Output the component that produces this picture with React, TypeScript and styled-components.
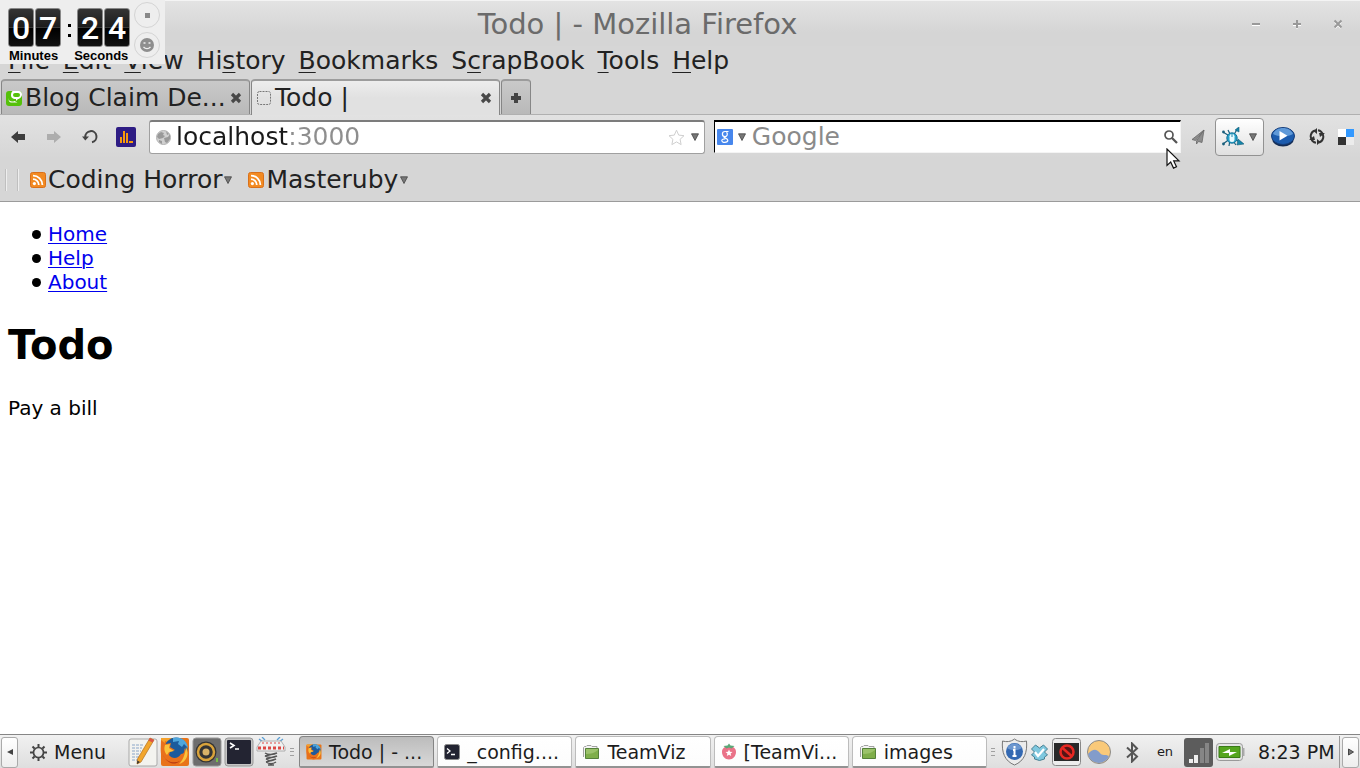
import React from 'react';
import styled, { createGlobalStyle, css } from 'styled-components';

const Global = createGlobalStyle`
  *, *::before, *::after { box-sizing: border-box; }
  body { margin: 0; background: #fff; font-family: "DejaVu Sans", sans-serif; }
  button, input { font: inherit; color: inherit; }
  svg { display: block; flex: none; }
`;

const Desktop = styled.div`
  position: relative;
  min-height: 100vh;
  display: flex;
  flex-direction: column;
  overflow: hidden;
`;

/* ---------- browser chrome ---------- */

const Chrome = styled.header`
  background: #d6d6d6;
  border-bottom: 1px solid #9b9b9b;
  color: #222;
  font-size: 25px;
  line-height: 30px;
`;

const TitleBar = styled.div`
  display: flex;
  align-items: center;
  height: 46px;
  padding: 0 2px 0 40px;
  background: linear-gradient(#e3e3e3, #d5d5d5 70%);
  border-top: 1px solid #f4f4f4;
  color: #6b6b6b;
`;

const WindowTitle = styled.div`
  flex: 1;
  text-align: center;
  font-size: 29px;
  white-space: nowrap;
`;

const PlainButton = styled.button`
  display: flex;
  align-items: center;
  justify-content: center;
  border: 0;
  padding: 0;
  background: none;
`;

const WindowButton = styled(PlainButton)`
  width: 41px;
  height: 30px;
`;

const MenuBar = styled.nav`
  display: flex;
  height: 32px;
  padding-left: 1px;
`;

const MenuItem = styled.button`
  border: 0;
  background: none;
  padding: 0 6px 0 7px;
  height: 30px;
  line-height: 30px;
  white-space: nowrap;
  u { text-decoration-thickness: 1px; text-underline-offset: 3px; }
`;

const TabStrip = styled.div`
  display: flex;
  gap: 1px;
  height: 37px;
  padding: 1px 0 0 1px;
  border-bottom: 1px solid #b0b0b0;
`;

const tabShape = css<{ $active?: boolean }>`
  border: 1px solid #868686;
  border-top: 2px solid #9c9c9c;
  border-bottom: 0;
  border-radius: 4px 4px 0 0;
  background: ${p => (p.$active ? 'linear-gradient(#ededed, #e1e1e1 50%)' : 'linear-gradient(#c9c9c9, #b9b9b9)')};
  height: ${p => (p.$active ? '36px' : '35px')};
`;

const Tab = styled.div<{ $active?: boolean }>`
  ${tabShape}
  display: flex;
  align-items: center;
  flex: 0 1 249px;
  min-width: 0;
  padding: 0 4px;
`;

const TabLabel = styled.button`
  flex: 1;
  min-width: 0;
  display: flex;
  align-items: center;
  gap: 3px;
  border: 0;
  padding: 0;
  background: none;
  text-align: left;
  span { white-space: nowrap; }
`;

const TabClose = styled(PlainButton)`
  width: 18px;
  height: 20px;
`;

const NewTab = styled.button`
  ${tabShape}
  width: 30px;
  padding: 0;
  display: flex;
  align-items: center;
  justify-content: center;
`;

const NavBar = styled.div`
  display: flex;
  align-items: center;
  height: 43px;
  padding: 0 6px 0 0;
  background: linear-gradient(#e2e2e2, #d6d6d6);
`;

const NavButton = styled(PlainButton)<{ $w?: number }>`
  flex: none;
  width: ${p => p.$w ?? 36}px;
  height: 36px;
`;

const AddressBox = styled.div`
  flex: 550 1 0;
  min-width: 0;
  display: flex;
  align-items: center;
  height: 34px;
  margin: 0 9px 0 5px;
  padding: 0 0 0 6px;
  background: #fff;
  border: 1px solid #a0a0a0;
  border-top: 2px solid #7c7c7c;
  border-radius: 3px;
`;

const AddressInput = styled.input`
  flex: 1;
  min-width: 0;
  border: 0;
  outline: 0;
  padding: 0 0 0 5px;
  height: 30px;
  background: linear-gradient(90deg, #1a1a1a 116px, #8e8e8e 116px);
  background-clip: text;
  -webkit-background-clip: text;
  -webkit-text-fill-color: transparent;
`;

const SearchBox = styled.div`
  position: relative;
  flex: 465 1 0;
  min-width: 0;
  display: flex;
  align-items: center;
  height: 33px;
  padding-left: 2px;
  background: #fff;
  border: 1px solid #f4f4f4;
  border-top: 2px solid #000;
  border-left-color: #000;
`;

const SearchInput = styled.input`
  flex: 1;
  min-width: 0;
  border: 0;
  outline: 0;
  padding: 0 0 0 1px;
  height: 29px;
  background: none;
  &::placeholder { color: #8a8a8a; opacity: 1; }
`;

const SmallButton = styled(PlainButton)`
  flex: none;
  width: 18px;
  height: 28px;
`;

const Pointer = styled.div`
  position: absolute;
  right: -1px;
  top: 26px;
  z-index: 3;
`;

const ProxyButton = styled.button`
  flex: none;
  display: flex;
  align-items: center;
  justify-content: center;
  gap: 5px;
  width: 49px;
  height: 38px;
  padding: 0;
  border: 1px solid #929292;
  border-radius: 4px;
  background: linear-gradient(#fff, #e0e0e0);
`;

const DeliciousButton = styled(PlainButton)`
  margin-left: 7px;
`;

const BookmarkBar = styled.div`
  display: flex;
  align-items: center;
  height: 43px;
  padding-left: 5px;
`;

const BarGrip = styled.div`
  width: 13px;
  height: 22px;
  margin-right: 12px;
  border-left: 1px solid #bfbfbf;
  border-right: 1px solid #bfbfbf;
  box-shadow: 1px 0 #eee, inset 1px 0 #eee;
`;

const Bookmark = styled.button`
  display: flex;
  align-items: center;
  gap: 2px;
  border: 0;
  padding: 0;
  margin-right: 16px;
  background: none;
  white-space: nowrap;
`;

/* ---------- web page ---------- */

const Page = styled.main`
  flex: 1;
  padding: 0 8px;
  background: #fff;
  color: #000;
  font-size: 20px;
  line-height: 24px;
`;

const NavList = styled.ul`
  margin: 20px 0 27px;
  padding-left: 24px;
  list-style: none;
  li { display: flex; align-items: center; gap: 7px; }
  li::before { content: ""; width: 9px; height: 9px; border-radius: 50%; background: #000; }
  a { color: #0000ee; text-decoration-thickness: 1px; text-underline-offset: 2px; }
`;

const Heading = styled.h1`
  margin: 0 0 27px;
  font-size: 40px;
  line-height: 48px;
`;

const Task = styled.p`
  margin: 0;
`;

/* ---------- countdown overlay ---------- */

const Timer = styled.aside`
  position: absolute;
  left: 0;
  top: 0;
  z-index: 2;
  display: flex;
  width: 165px;
  height: 64px;
  padding: 8px 4px 0 8px;
  background: #eee;
  color: #000;
`;

const TimerFace = styled.div`
  flex: none;
  width: 122px;
`;

const DigitRow = styled.div`
  display: flex;
`;

const Digits = styled.div`
  display: flex;
  gap: 1px;
`;

const TimerLabels = styled.div`
  display: flex;
  gap: 16px;
  padding-left: 1px;
  font: bold 13px/18px "Liberation Sans", sans-serif;
`;

const Digit = styled.span`
  width: 26px;
  height: 39px;
  border: 1px solid #888;
  border-radius: 3px;
  background: linear-gradient(#343434, #1c1c1c 48%, #555 49%, #000 52%, #111);
  color: #fff;
  text-align: center;
  font: 500 32px/38px Roboto, sans-serif;
`;

const Colon = styled.div`
  width: 16px;
  display: flex;
  flex-direction: column;
  align-items: center;
  gap: 7px;
  padding-top: 16px;
  i { width: 3px; height: 3px; background: #000; }
`;

const TimerButtons = styled.div`
  display: flex;
  flex-direction: column;
  gap: 4px;
  margin: -6px 0 0 4px;
`;

const RoundButton = styled(PlainButton)`
  width: 26px;
  height: 26px;
  border: 1px solid #d4d4d4;
  border-radius: 50%;
`;

/* ---------- desktop panel ---------- */

const Panel = styled.footer`
  display: flex;
  align-items: center;
  height: 34px;
  padding: 1px 1px 0;
  border-top: 1px solid #868686;
  background: linear-gradient(#f1f1f1, #dedede);
  color: #1c1c1c;
  font-size: 19px;
  line-height: 24px;
`;

const PanelArrow = styled.button`
  flex: none;
  display: flex;
  align-items: center;
  justify-content: center;
  width: 17px;
  height: 31px;
  padding: 0;
  border: 1px solid #aaa;
  border-radius: 3px;
  background: linear-gradient(#fff, #eee);
`;

const StartMenu = styled.button`
  flex: none;
  display: flex;
  align-items: center;
  gap: 7px;
  width: 110px;
  padding: 0 0 0 12px;
  border: 0;
  background: none;
`;

const Launchers = styled.div`
  flex: none;
  display: flex;
  gap: 2px;
`;

const Launcher = styled(PlainButton)`
  width: 30px;
  height: 30px;
`;

const PanelGrip = styled.div`
  flex: none;
  width: 4px;
  height: 8px;
  border-top: 1px solid #a0a0a0;
  border-bottom: 1px solid #a0a0a0;
  background: linear-gradient(transparent 2px, #a0a0a0 2px, #a0a0a0 3px, transparent 3px);
  margin: 0 5px 0 4px;
`;

const TaskList = styled.div`
  flex: 1;
  min-width: 0;
  display: flex;
  gap: 3px;
`;

const TaskButton = styled.button<{ $active?: boolean }>`
  flex: 1 1 0;
  min-width: 0;
  display: flex;
  align-items: center;
  gap: 7px;
  height: 32px;
  padding: 0 6px;
  border: 1px solid ${p => (p.$active ? '#858585' : '#bcbcbc')};
  border-bottom: 2px solid #929292;
  border-radius: 4px 4px 2px 2px;
  background: ${p => (p.$active ? 'linear-gradient(#bcbcbc, #d8d8d8)' : 'linear-gradient(#fff, #fcfcfc)')};
  span { white-space: nowrap; }
`;

const Tray = styled.div`
  flex: none;
  display: flex;
  align-items: center;
`;

const TrayCell = styled.button<{ $w: number }>`
  display: flex;
  align-items: center;
  justify-content: center;
  width: ${p => p.$w}px;
  height: 30px;
  padding: 0;
  border: 0;
  background: none;
`;

const Language = styled(TrayCell)`
  font-size: 13px;
`;

const Clock = styled.div`
  flex: none;
  width: 92px;
  padding-left: 10px;
  margin-right: 2px;
  border-right: 1px solid #999;
  line-height: 32px;
  white-space: nowrap;
`;

/* ---------- drawings ---------- */

const Down = ({ size = 8 }: { size?: number }) => (
  <svg width={size} height={size} viewBox="0 0 8 8"><path d="M.5.8h7L4 7.5z" fill="#777" stroke="#444" strokeWidth=".8" /></svg>
);

const CloseMark = () => (
  <svg width="12" height="12" viewBox="0 0 12 12"><path d="M2 2l8 8M10 2l-8 8" stroke="#484848" strokeWidth="3.200" /></svg>
);

const Feed = () => (
  <svg width="16" height="16" viewBox="0 0 16 16">
    <rect x=".5" y=".5" width="15" height="15" rx="2" fill="#f28a22" stroke="#d9701a" />
    <circle cx="4.4" cy="11.6" r="1.6" fill="#fff" />
    <path d="M3 7.2a5.8 5.8 0 0 1 5.8 5.8M3 3.6a9.4 9.4 0 0 1 9.4 9.4" fill="none" stroke="#fff" strokeWidth="1.8" />
  </svg>
);

const Firefox = ({ size }: { size: number }) => (
  <svg width={size} height={size} viewBox="0 0 30 30">
    <rect x="1" y="1" width="28" height="28" rx="2" fill="#e87418" />
    <path d="M1 1h12L8 5 5 4 4 12 1 14z" fill="#f5a12b" />
    <circle cx="16" cy="12" r="11.5" fill="#1d5b9c" />
    <path d="M13 1c7-2 14 2 15 10l-4-4-2 3-4-3 1-3-6 1z" fill="#4ea6dc" />
    <path d="M1 3l5 4 5-1-1 4 5 3-5 2-1 3c3 4 9 4 12-1 3 0 4-3 3-6 4 5 4 11-1 15-6 4-13 4-18-1C-1 19 1 10 1 3z" fill="#e9711c" />
    <path d="M5 8l5-1-1 4 5 3-5 1-2 3C4 15 4 11 5 8zM26 10c4 8 0 15-7 17 4-4 6-9 7-17z" fill="#fbc33c" />
    <path d="M3 18c3 7 11 9 17 6-4 4-12 4-17-6z" fill="#b83c12" />
  </svg>
);

const Terminal = ({ size }: { size: number }) => (
  <svg width={size} height={size} viewBox="0 0 30 30">
    <rect x="1" y="1" width="28" height="28" rx="3" fill="#c4c4c4" stroke="#999" />
    <rect x="3" y="3" width="24" height="24" rx="1" fill="#232432" />
    <path d="M6 6l4 2.500-4 2.500M11 12h4" fill="none" stroke="#fff" strokeWidth="1.600" />
  </svg>
);

const SmallTerminal = () => (
  <svg width="16" height="16" viewBox="0 0 16 16">
    <rect x=".5" y=".5" width="15" height="15" rx="2" fill="#232432" stroke="#8c8c8c" />
    <path d="M3 4.500l3 2.500-3 2.500M7 10.500h4" fill="none" stroke="#fff" strokeWidth="1.300" />
  </svg>
);

const Folder = () => (
  <svg width="18" height="16" viewBox="0 0 18 16">
    <path d="M1.5 13V3.5l1-1H4l1-1h4l1 1h5v2" fill="#f4f4f4" stroke="#a2a2a2" />
    <path d="M3.500 4.500h13v10h-13z" fill="#7fae4a" stroke="#55813a" />
    <path d="M4 5.500h12" stroke="#b5d48c" />
    <path d="M4 10c5 0 8-1 12-4v-1H4z" fill="#9bc26a" />
  </svg>
);

const Berry = () => (
  <svg width="16" height="17" viewBox="0 0 16 17">
    <path d="M8 4c4-1 7 1 7 5s-3 7.500-7 7.500S1 13 1 9s3-6 7-5z" fill="#ea7288" />
    <path d="M2.500 3l4-.5L8 .5l1.500 2 4 .5-3 2.500-2.500-1-2.500 1z" fill="#5ba777" />
    <path d="M8 6.500l1 2.200 2.500.2-1.900 1.600.6 2.500L8 11.700 5.800 13l.6-2.500-1.900-1.600 2.500-.2z" fill="#fff" />
  </svg>
);

const bookmarks = ['Coding Horror', 'Masteruby'];
const menus: [string, string, string][] = [
  ['', 'F', 'ile'], ['', 'E', 'dit'], ['', 'V', 'iew'], ['Hi', 's', 'tory'],
  ['', 'B', 'ookmarks'], ['S', 'c', 'rapBook'], ['', 'T', 'ools'], ['', 'H', 'elp'],
];
const tasks = [
  { label: 'Todo | - ...', icon: <Firefox size={16} />, active: true },
  { label: '_config....', icon: <SmallTerminal /> },
  { label: 'TeamViz', icon: <Folder /> },
  { label: '[TeamVi...', icon: <Berry /> },
  { label: 'images', icon: <Folder /> },
];

function CountdownTimer() {
  return (
    <Timer>
      <TimerFace>
        <DigitRow>
          <Digits><Digit>0</Digit><Digit>7</Digit></Digits>
          <Colon><i /><i /></Colon>
          <Digits><Digit>2</Digit><Digit>4</Digit></Digits>
        </DigitRow>
        <TimerLabels><span>Minutes</span><span>Seconds</span></TimerLabels>
      </TimerFace>
      <TimerButtons>
        <RoundButton aria-label="Stop">
          <svg width="5" height="5"><rect width="5" height="5" fill="#888" /></svg>
        </RoundButton>
        <RoundButton aria-label="Mood">
          <svg width="14" height="14" viewBox="0 0 14 14">
            <circle cx="7" cy="7" r="7" fill="#8e8e8e" />
            <path d="M3.500 5h2M8.500 5h2M3.500 9c2 2 5 2 7 0" fill="none" stroke="#eee" strokeWidth="1.400" />
          </svg>
        </RoundButton>
      </TimerButtons>
    </Timer>
  );
}

function Navigation() {
  return (
    <NavBar>
      <NavButton aria-label="Back">
        <svg width="14" height="12" viewBox="0 0 14 12"><path d="M0 6l7-6v3h7v6H7v3z" fill="#3d3d3d" /></svg>
      </NavButton>
      <NavButton aria-label="Forward">
        <svg width="14" height="12" viewBox="0 0 14 12"><path d="M14 6L7 0v3H0v6h7v3z" fill="#adadad" /></svg>
      </NavButton>
      <NavButton aria-label="Reload">
        <svg width="16" height="15" viewBox="0 0 16 15">
          <path d="M3.300 8A5.600 5.600 0 1 1 10 13.200" fill="none" stroke="#444" strokeWidth="2" />
          <path d="M0 7.500h7L3.300 11.500z" fill="#444" />
        </svg>
      </NavButton>
      <NavButton aria-label="Statistics">
        <svg width="20" height="20" viewBox="0 0 20 20">
          <rect width="20" height="20" rx="2" fill="#2e1c84" />
          <path d="M4 10h2v6H4zM7 4h2v12H7zM10 6h2v10h-2zM13 14h4v2h-4z" fill="#f79a0c" />
        </svg>
      </NavButton>
      <AddressBox>
        <svg width="15" height="15" viewBox="0 0 15 15">
          <circle cx="7.500" cy="7.500" r="7" fill="#d0d0d0" stroke="#b2b2b2" />
          <path d="M2 4l3-2 3 1-1 2 2 1-2 2-4 1-2-2zM8 8l4-1 2-3v5l-3 4-2-1zM3 10l3 1v3l-3-2zM10 1l3 3-2 1z" fill="#999" />
        </svg>
        <AddressInput aria-label="Address" defaultValue="localhost:3000" />
        <SmallButton aria-label="Bookmark this page">
          <svg width="17" height="17" viewBox="0 0 17 17"><path d="M8.500 1.200l2.200 4.900 5.300.6-3.900 3.600 1 5.300-4.600-2.700-4.600 2.700 1-5.300L1 6.700l5.300-.6z" fill="#fff" stroke="#cfcfcf" /></svg>
        </SmallButton>
        <SmallButton aria-label="History"><Down /></SmallButton>
      </AddressBox>
      <SearchBox>
        <svg width="16" height="16" viewBox="0 0 16 16">
          <rect width="16" height="16" rx="1" fill="#4787ed" />
          <path d="M11.500 2.500H8a2.600 2.600 0 1 0 0 5.200 2.600 2.600 0 0 0 1.500-4.500M7 7.700c-1 1 3.800 1.300 3.800 3.600 0 2.800-6 2.800-6 .3 0-1.400 2-1.800 3.500-1.700" fill="none" stroke="#fff" strokeWidth="1.200" />
        </svg>
        <SmallButton aria-label="Search engine"><Down /></SmallButton>
        <SearchInput aria-label="Search" placeholder="Google" />
        <SmallButton aria-label="Go">
          <svg width="14" height="14" viewBox="0 0 14 14"><circle cx="5" cy="5" r="4" fill="none" stroke="#555" strokeWidth="1.700" /><path d="M8 8l5 5" stroke="#555" strokeWidth="2.300" /></svg>
        </SmallButton>
        <Pointer>
          <svg width="15" height="22" viewBox="0 0 15 22"><path d="M1 1v16.500l3.700-3.400 2.800 6 3-1.400-2.800-5.800H13z" fill="#fff" stroke="#111" strokeWidth="1.200" /></svg>
        </Pointer>
      </SearchBox>
      <NavButton $w={34} aria-label="Send">
        <svg width="14" height="16" viewBox="0 0 14 16"><path d="M13 1L1 10.500l3.500 1zM13 1L5.500 12v3l2-2.500 3.500 1z" fill="#8d8d8d" stroke="#686868" strokeWidth=".8" /></svg>
      </NavButton>
      <ProxyButton aria-label="Proxy">
        <svg width="22" height="20" viewBox="0 0 22 20">
          <path d="M9 10L1 5M9 11l-8 6M11 9l5-8M12 12l8 4M8 13l-1 6M11 14l3 4M8 7L6 3" stroke="#195e7b" strokeWidth="1.200" />
          <path d="M13 3l4-3v5zM16 12l6 5-7 1z" fill="#1686aa" stroke="#195e7b" strokeWidth=".6" />
          <circle cx="1.500" cy="5" r="1.400" fill="#195e7b" /><circle cx="1.500" cy="17" r="1.400" fill="#195e7b" />
          <circle cx="10" cy="11" r="5.200" fill="#27a0c7" stroke="#16739a" />
          <rect x="7.500" y="7" width="5" height="8" rx="2.300" fill="#e9faff" /><path d="M10 7v3" stroke="#2488ab" />
        </svg>
        <Down />
      </ProxyButton>
      <NavButton $w={38} aria-label="Play">
        <svg width="24" height="20" viewBox="0 0 24 20">
          <ellipse cx="12" cy="11.500" rx="11" ry="8" fill="#142c53" />
          <ellipse cx="12" cy="9" rx="11.500" ry="8.500" fill="#1c5cae" stroke="#173e7a" />
          <path d="M2 7C5-1 19-1 22 7c-5 3-15 3-20 0z" fill="#5f99d8" />
          <path d="M8.500 4l8 4.800-8 4.700z" fill="#fff" />
        </svg>
      </NavButton>
      <NavButton $w={29} aria-label="Sync">
        <svg width="16" height="17" viewBox="0 0 16 17">
          <path d="M6 2.500a6 6 0 0 0-2.500 10M10 14.500a6 6 0 0 0 2.500-10M9 2.300a6 6 0 0 1 4.800 4.500M7 14.700a6 6 0 0 1-4.800-4.500" fill="none" stroke="#333" strokeWidth="2" />
          <path d="M8 0v6L4.500 3zM8 17v-6l3.500 3zM0 12h6l-1-4zM16 5h-6l1 4z" fill="#333" />
        </svg>
      </NavButton>
      <DeliciousButton aria-label="Delicious">
        <svg width="16" height="16" viewBox="0 0 16 16"><path d="M0 0h8v8H0z" fill="#fff" /><path d="M8 0h8v8H8z" fill="#3399ff" /><path d="M0 8h8v8H0z" fill="#333" /><path d="M8 8h8v8H8z" fill="#ececec" /></svg>
      </DeliciousButton>
    </NavBar>
  );
}

function Browser() {
  return (
    <Chrome>
      <TitleBar>
        <WindowTitle>Todo | - Mozilla Firefox</WindowTitle>
        <WindowButton aria-label="Minimize"><svg width="10" height="10"><path d="M1 5h8" stroke="#999" strokeWidth="2" /><path d="M1 6.500h8" stroke="#fff" /></svg></WindowButton>
        <WindowButton aria-label="Maximize"><svg width="10" height="10"><path d="M1 6.500h8M5 9v1" stroke="#fff" /><path d="M1 5h8M5 1v8" stroke="#999" strokeWidth="2" /></svg></WindowButton>
        <WindowButton aria-label="Close"><svg width="10" height="10"><path d="M2 3l6 6M8 3L2 9" stroke="#fff" strokeWidth="2" /><path d="M1.500 1.500l7 7M8.500 1.500l-7 7" stroke="#999" strokeWidth="2" /></svg></WindowButton>
      </TitleBar>
      <MenuBar>
        {menus.map(([before, key, after]) => (
          <MenuItem key={before + key + after}>{before}<u>{key}</u>{after}</MenuItem>
        ))}
      </MenuBar>
      <TabStrip>
        <Tab>
          <TabLabel>
            <svg width="16" height="16" viewBox="0 0 16 16">
              <rect y="1" width="16" height="15" rx="3" fill="#55c10a" />
              <path d="M7 1h6c2 0 3 1.500 3 3.500S14 9 12 9l-2 2V9C6 9 5 7 5 5s1-4 2-4z" fill="#fff" />
              <rect x="7" y="3" width="7" height="4" rx="2" fill="#55c10a" />
              <path d="M2.500 8c0 4 4 4 6 3l3 1.500H6c-3 0-3.500-2-3.500-4.500z" fill="#fff" />
            </svg>
            <span>Blog Claim De...</span>
          </TabLabel>
          <TabClose aria-label="Close tab"><CloseMark /></TabClose>
        </Tab>
        <Tab $active>
          <TabLabel>
            <svg width="16" height="16" viewBox="0 0 16 16"><rect x="1.500" y="1.500" width="13" height="13" rx="2" fill="none" stroke="#777" strokeDasharray="2 1" /></svg>
            <span>Todo |</span>
          </TabLabel>
          <TabClose aria-label="Close tab"><CloseMark /></TabClose>
        </Tab>
        <NewTab aria-label="New tab"><svg width="12" height="12"><path d="M6 1v10M1 6h10" stroke="#444" strokeWidth="4" /></svg></NewTab>
      </TabStrip>
      <Navigation />
      <BookmarkBar>
        <BarGrip />
        {bookmarks.map(name => (
          <Bookmark key={name}><Feed />{name}<Down /></Bookmark>
        ))}
      </BookmarkBar>
    </Chrome>
  );
}

function DesktopPanel() {
  return (
    <Panel>
      <PanelArrow aria-label="Hide panel left"><svg width="6" height="6"><path d="M6 0v6L0 3z" fill="#444" /></svg></PanelArrow>
      <StartMenu>
        <svg width="17" height="17" viewBox="0 0 17 17">
          <circle cx="8.500" cy="8.500" r="5" fill="none" stroke="#444" strokeWidth="1.700" />
          <path d="M8.500 0v3M8.500 14v3M0 8.500h3M14 8.500h3M2.500 2.500l2 2M12.500 12.500l2 2M14.500 2.500l-2 2M4.500 12.500l-2 2" stroke="#444" strokeWidth="2" />
        </svg>
        Menu
      </StartMenu>
      <Launchers>
        <Launcher aria-label="Text editor">
          <svg width="30" height="30" viewBox="0 0 30 30">
            <rect x="1" y="2" width="28" height="27" rx="2" fill="#f3f3ef" stroke="#a9a9a9" />
            <path d="M4 8h12M4 11h10M4 14h9M4 17h8M4 20h7M4 23h6" stroke="#8ba6c7" strokeDasharray="3 1" />
            <path d="M22 1l4 2-13 22-4 2 .5-5z" fill="#f2a62c" stroke="#b16f1d" strokeWidth=".7" /><path d="M22 1l4 2-1.500 2.500-4-2z" fill="#dc5346" /><path d="M9.300 23.500L9 27l3-2z" fill="#333" />
          </svg>
        </Launcher>
        <Launcher aria-label="Firefox"><Firefox size={30} /></Launcher>
        <Launcher aria-label="Music">
          <svg width="30" height="30" viewBox="0 0 30 30">
            <rect x="1" y="1" width="28" height="28" rx="3" fill="#6d6d6d" stroke="#999" />
            <circle cx="14" cy="15" r="10.500" fill="#343434" /><circle cx="14" cy="15" r="8" fill="none" stroke="#d9a33b" strokeWidth="2.500" /><circle cx="14" cy="15" r="3.500" fill="#d8b268" />
            <path d="M25 21v4" stroke="#77bd48" strokeWidth="2" />
          </svg>
        </Launcher>
        <Launcher aria-label="Terminal"><Terminal size={30} /></Launcher>
        <Launcher aria-label="Spring">
          <svg width="30" height="30" viewBox="0 0 30 30">
            <path d="M3 2l4 3M6 0l3 3M27 2l-4 3M24 0l-3 3" stroke="#5c9fd4" strokeWidth="1.300" />
            <path d="M5 4h20l4 6v4H1v-4z" fill="#f1f1f1" stroke="#a0a0a0" strokeWidth=".8" />
            <path d="M2 11h26" stroke="#dc4945" strokeWidth="3" strokeDasharray="3 2" /><path d="M6 6h18" stroke="#dc4945" strokeDasharray="2 2" />
            <path d="M9 16c3 2 9 2 12 0M9 19c3 2 9 2 12 0M10 22c3 2 7 2 10 0M10 25c3 2 7 2 10 0M12 28h6M21 16l-12 3M21 19l-11 3M20 22l-10 3" fill="none" stroke="#555" strokeWidth="1.500" />
          </svg>
        </Launcher>
      </Launchers>
      <PanelGrip />
      <TaskList>
        {tasks.map(t => (
          <TaskButton key={t.label} $active={t.active}>{t.icon}<span>{t.label}</span></TaskButton>
        ))}
      </TaskList>
      <PanelGrip />
      <Tray>
        <TrayCell $w={28} aria-label="Updates">
          <svg width="27" height="28" viewBox="0 0 27 28">
            <path d="M13.500 1c4 3 8 3 12 2 1 11-2 20-12 24C3.500 23 .5 14 1.500 3c4 1 8 1 12-2z" fill="#ececec" stroke="#777" />
            <circle cx="13.500" cy="13.500" r="8.500" fill="#3469b2" /><path d="M6 10c3-6 12-6 15 0-5 3-10 3-15 0z" fill="#6c97cf" />
            <path d="M13.500 8v2.500M12 12h1.500v6M11.500 18h4" fill="none" stroke="#fff" strokeWidth="2" />
          </svg>
        </TrayCell>
        <TrayCell $w={23} aria-label="Dropbox">
          <svg width="17" height="17" viewBox="0 0 17 17"><path d="M4.500 1l4 3 4-3 4 4-3 3 3 3-3 2v2l-5 1.500-5-1.500v-2l-3-2 3-3-3-3z" fill="#7fc8df" stroke="#467f91" /><path d="M4 8l3 4 6-7" fill="none" stroke="#fff" strokeWidth="2.200" /></svg>
        </TrayCell>
        <TrayCell $w={30} aria-label="Do not disturb">
          <svg width="29" height="28" viewBox="0 0 29 28"><rect x=".5" y=".5" width="28" height="27" rx="3" fill="#ededed" stroke="#888" /><path d="M2 5h25v18H2z" fill="#292929" /><circle cx="15" cy="14" r="6.500" fill="#551515" stroke="#e82822" strokeWidth="2.500" /><path d="M10.500 10l9 8" stroke="#e82822" strokeWidth="2.500" /></svg>
        </TrayCell>
        <TrayCell $w={36} aria-label="Weather">
          <svg width="24" height="24" viewBox="0 0 24 24"><circle cx="12" cy="12" r="11.500" fill="#f9c979" stroke="#8a8a8a" /><path d="M1 14c5-6 9-5 12-1 2 3 5 1 9 3-3 9-18 10-21-2z" fill="#839cca" /></svg>
        </TrayCell>
        <TrayCell $w={30} aria-label="Bluetooth">
          <svg width="13" height="21" viewBox="0 0 13 21"><path d="M1 5.500l10 9-5 5v-18l5 5-10 9" fill="none" stroke="#555" strokeWidth="2" /></svg>
        </TrayCell>
        <Language $w={36}>en</Language>
        <TrayCell $w={30} aria-label="Network">
          <svg width="29" height="29" viewBox="0 0 29 29"><rect width="29" height="29" rx="3" fill="#5c5c5c" /><path d="M5 21h4v4H5zM10 17h4v8h-4z" fill="#eee" /><path d="M16 10h4v15h-4zM21 5h4v20h-4z" fill="#858585" /></svg>
        </TrayCell>
        <TrayCell $w={35} aria-label="Battery">
          <svg width="30" height="18" viewBox="0 0 30 18"><rect x=".5" y=".5" width="26" height="17" rx="3" fill="#e4e4e4" stroke="#999" /><path d="M27.500 5v8" stroke="#aaa" strokeWidth="2" /><path d="M3 3.500h21v11H3z" fill="#55a51f" stroke="#3a7b18" /><path d="M6 10l8-4v3h7l-8 4v-3z" fill="#fff" /></svg>
        </TrayCell>
      </Tray>
      <Clock>8:23 PM</Clock>
      <PanelArrow aria-label="Hide panel right"><svg width="6" height="8"><path d="M.5 1v6L5.500 4z" fill="#777" stroke="#444" /></svg></PanelArrow>
    </Panel>
  );
}

export default function App() {
  return (
    <Desktop>
      <Global />
      <Browser />
      <CountdownTimer />
      <Page>
        <NavList>
          <li><a href="#home">Home</a></li>
          <li><a href="#help">Help</a></li>
          <li><a href="#about">About</a></li>
        </NavList>
        <Heading>Todo</Heading>
        <Task>Pay a bill</Task>
      </Page>
      <DesktopPanel />
    </Desktop>
  );
}
